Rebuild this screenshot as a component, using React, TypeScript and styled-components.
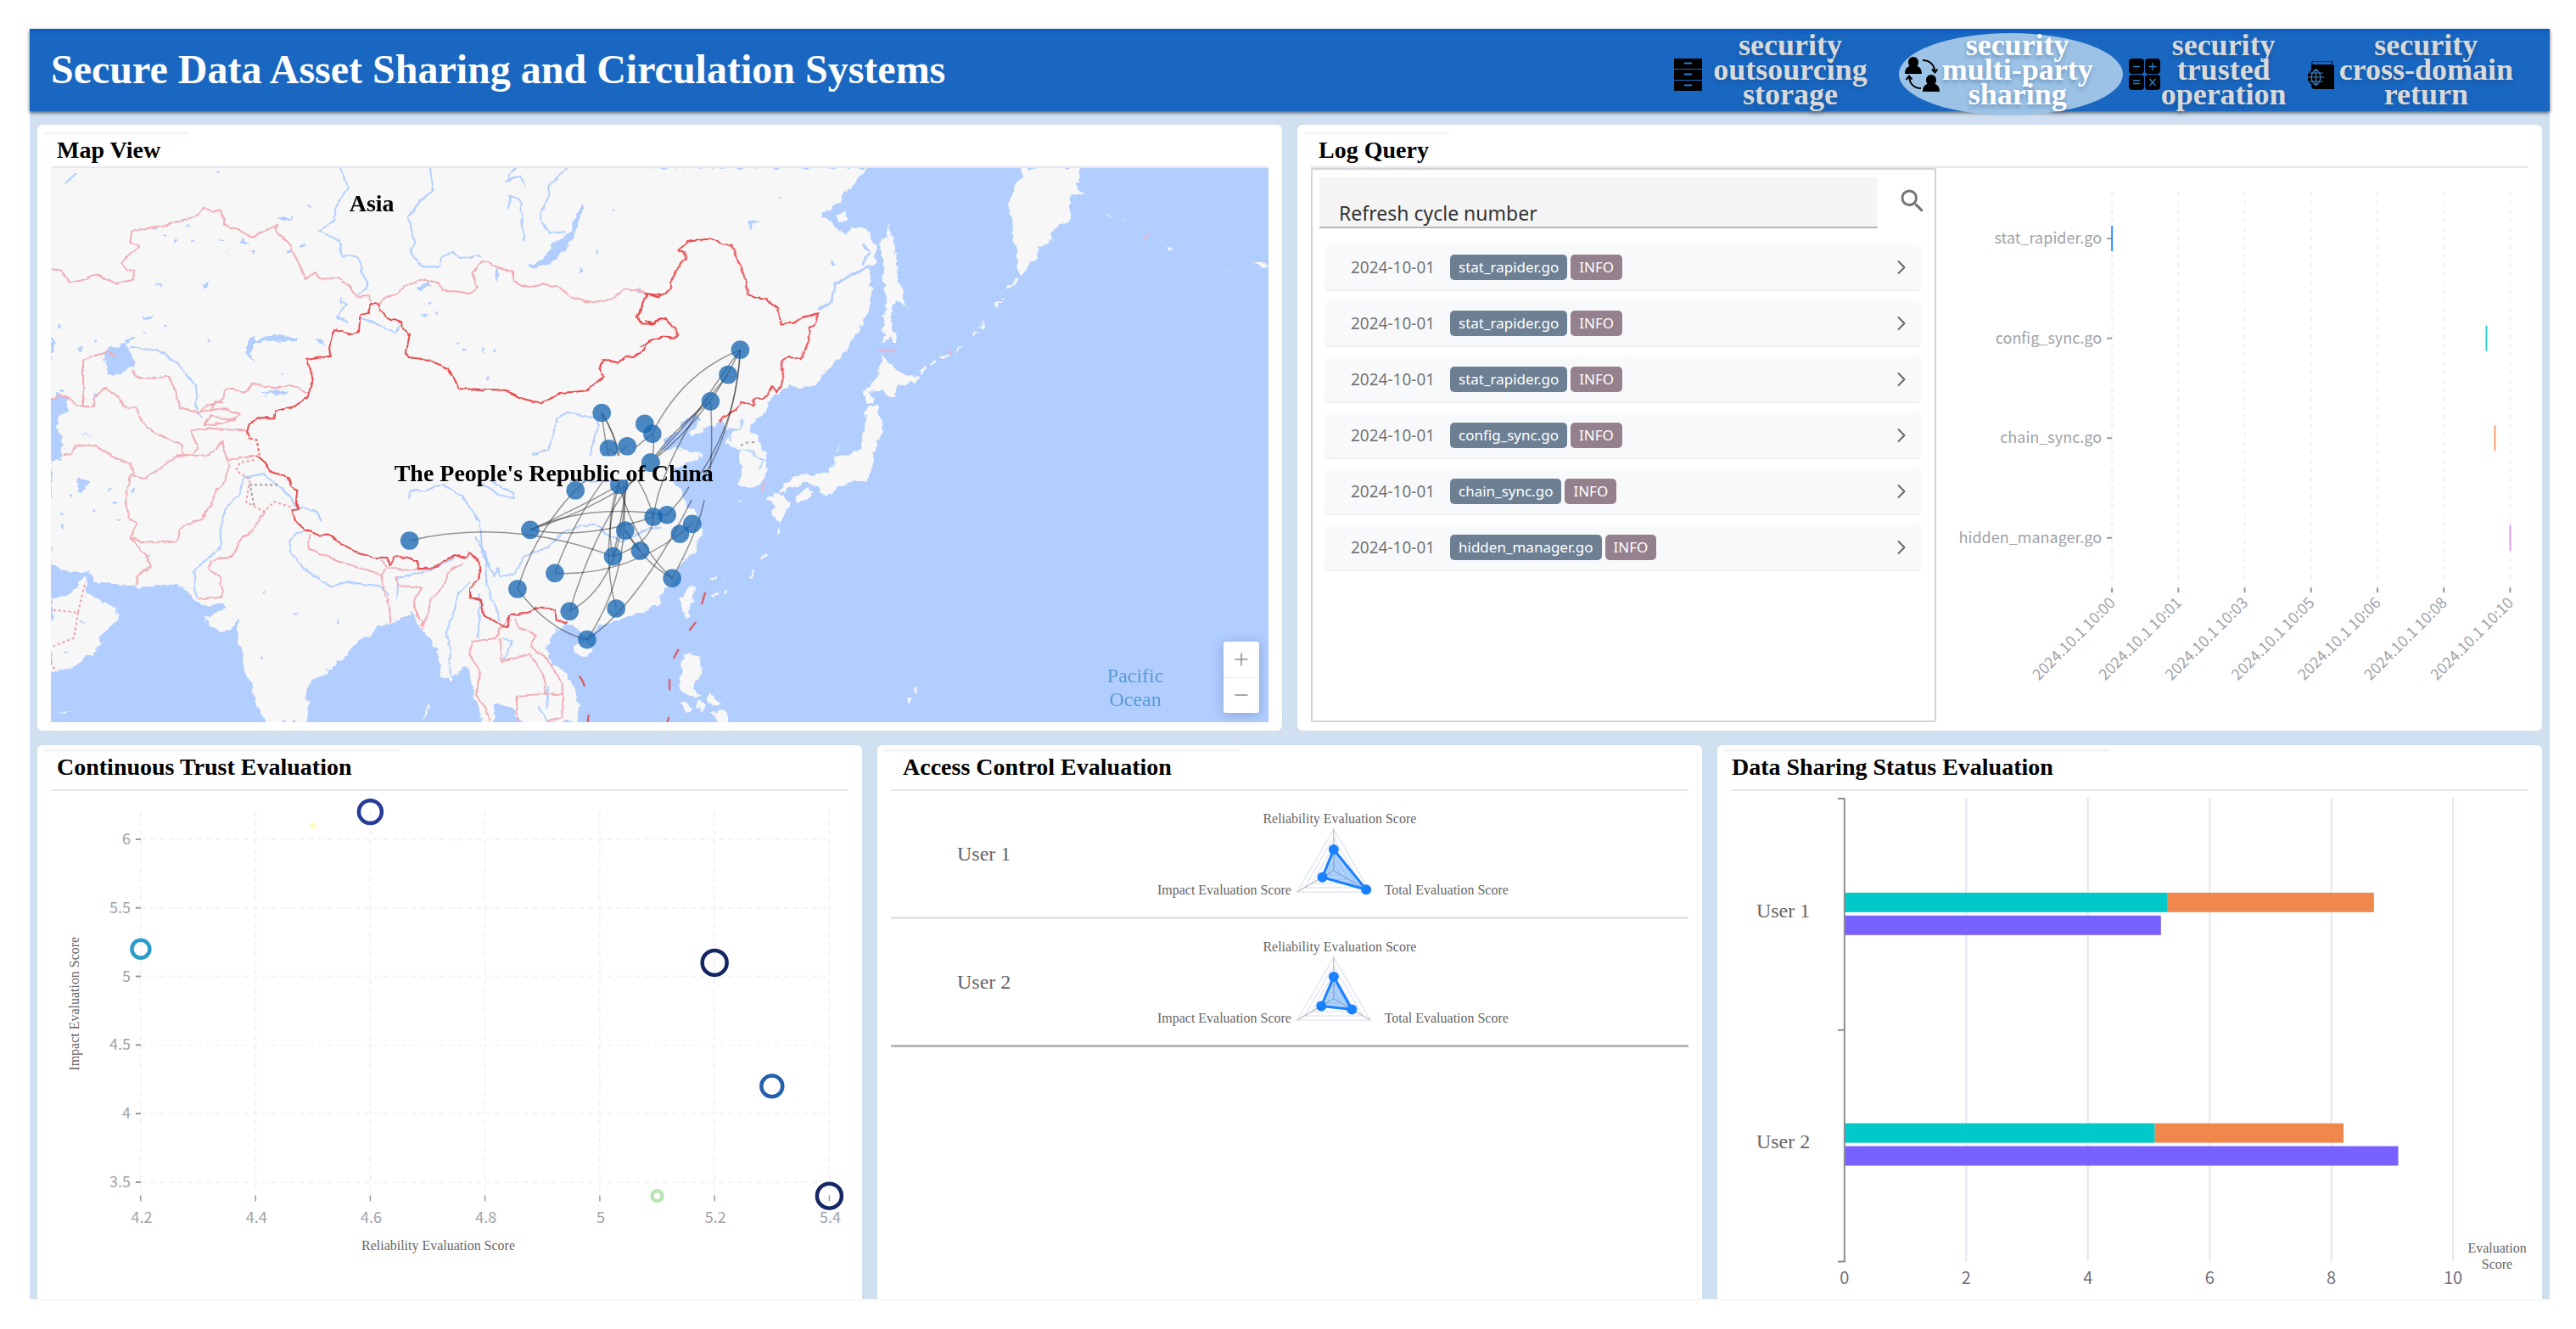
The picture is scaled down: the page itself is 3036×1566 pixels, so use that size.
import React, { useId } from "react";
import styled, { createGlobalStyle } from "styled-components";
import { ChevronRight, Minus, Plus } from "lucide-react";
import { MdSearch } from "react-icons/md";

const serif = `"Liberation Serif", "Times New Roman", serif`;
const sans = `"Noto Sans", "Open Sans", sans-serif`;
const chartSans = `"Noto Sans CJK SC", "Noto Sans", sans-serif`;

const Global = createGlobalStyle`
  * { box-sizing: border-box; }
  body { margin: 0; background: #fff; font-family: ${serif}; }
`;

/* ---------- shell ---------- */

const Page = styled.div`
  padding: 34px 31px 35px 35px;
`;

const Frame = styled.div`
  background: #d1e0f0;
`;

const Header = styled.header`
  position: relative;
  display: flex;
  justify-content: space-between;
  align-items: flex-start;
  height: 97px;
  padding: 5px 7px 0 25px;
  background: #1967c1;
  box-shadow: inset 0 5px 3px -1px #0a5dbd, 0 2px 4px rgba(40, 50, 60, 0.75);
`;

const AppTitle = styled.h1`
  margin: 0;
  font-size: 48px;
  line-height: 86px;
  font-weight: bold;
  color: #fff;
`;

const Nav = styled.nav`
  display: flex;
`;

const NavItem = styled.button<{ $active?: boolean; $tail: number }>`
  display: flex;
  align-items: center;
  height: 97px;
  padding: 0 ${(p) => p.$tail}px 0 7px;
  border: 0;
  border-radius: 50%;
  background: ${(p) => (p.$active ? "#9cc2e6" : "transparent")};
  color: ${(p) => (p.$active ? "#fff" : "#d9d9d9")};
  font: bold 36px/29px ${serif};
  text-shadow: 0 3px 5px rgba(20, 60, 110, 0.35);
  cursor: pointer;
`;

const NavIcon = styled.span<{ $box: number }>`
  display: flex;
  width: ${(p) => p.$box}px;
`;

const NavLabel = styled.span`
  align-self: flex-start;
  display: flex;
  flex-direction: column;
  align-items: center;
`;

const Body = styled.main`
  display: flex;
  flex-direction: column;
  gap: 17px;
  padding: 16px 9px 0;
`;

const Row = styled.div<{ $cols: number }>`
  display: grid;
  grid-template-columns: repeat(${(p) => p.$cols}, minmax(0, 1fr));
  gap: 18px;
`;

const Panel = styled.section<{ $flush?: boolean }>`
  display: flex;
  flex-direction: column;
  padding: 0 16px ${(p) => (p.$flush ? 0 : 10)}px;
  border-radius: ${(p) => (p.$flush ? "6px 6px 0 0" : "6px")};
  background: #fff;
  box-shadow: 0 0 2px #cfd4da;
`;

const PanelHead = styled.div<{ $tall?: boolean }>`
  height: ${(p) => (p.$tall ? 54 : 51)}px;
  padding-top: ${(p) => (p.$tall ? 4 : 8)}px;
  border-bottom: 2px solid #e4e7ed;
`;

const PanelTitle = styled.h2<{ $strip: number; $indent: number }>`
  width: ${(p) => p.$strip}px;
  margin: 0 0 0 -8px;
  padding-left: ${(p) => p.$indent + 8}px;
  border-top: 4px solid #f4f7f7;
  font-size: 28px;
  line-height: 36px;
  font-weight: bold;
  color: #000;
  white-space: nowrap;
`;

const Drawing = styled.svg`
  display: block;
  width: 100%;
  height: auto;
`;

/* ---------- navigation icons ---------- */

const CabinetIcon = () => (
  <svg width="33" height="38" viewBox="0 0 33 38" aria-hidden>
    {[0, 13, 26].map((y) => (
      <g key={y}>
        <rect x="0" y={y} width="33" height="12" fill="#000" />
        <rect x="12" y={y + 4.5} width="9" height="2" fill="#2f7fd0" />
      </g>
    ))}
  </svg>
);

const PeopleIcon = () => (
  <svg width="41" height="41" viewBox="0 0 41 41" aria-hidden>
    <path d="M10 0a6 6 0 0 1 6 6c0 2-.6 3.600-1.500 4.800C18 12.500 20 15 20 20H0c0-5 2-7.500 5.500-9.200C4.600 9.600 4 8 4 6a6 6 0 0 1 6-6Z" />
    <path d="M31 21a6 6 0 0 1 6 6c0 2-.6 3.600-1.500 4.800C39 33.500 41 36 41 41H21c0-5 2-7.500 5.500-9.200C25.600 30.600 25 29 25 27a6 6 0 0 1 6-6Z" />
    <path
      d="M21 4c8 0 14 5 14.500 14M32 14.500l3.500 4 3-4M19 37C11 37 5.500 32 5 23M1.500 27L5 22.500 8.500 26.500"
      fill="none"
      stroke="#000"
      strokeWidth="2"
    />
  </svg>
);

const CalculatorIcon = () => (
  <svg width="37" height="37" viewBox="0 0 37 37" aria-hidden>
    <rect width="18" height="18" rx="4" />
    <rect x="19" width="18" height="18" rx="4" />
    <rect y="19" width="18" height="18" rx="4" />
    <rect x="19" y="19" width="18" height="18" rx="4" />
    <path
      d="M5 9.500h8M23.500 9.500h9M28 5v9M5 26h8M5 29.500h8M24.500 24l7 8M31.500 24l-7 8"
      stroke="#2f7fd0"
      strokeWidth="1.300"
      fill="none"
    />
  </svg>
);

const GlobeBookIcon = () => (
  <svg width="31" height="34" viewBox="0 0 31 34" aria-hidden>
    <path d="M5 1h24v5h2v28H8c-3 0-4-2-4-5V5Z" />
    <path d="M6.500 1.500H28v3.500H6.500a1.800 1.800 0 0 1 0-3.500Z" fill="#1967c1" />
    <circle cx="9.500" cy="20" r="10" />
    <path
      d="M9.500 10.500v19M0 20h19.500M2 15h15.500M2 25h15.500M9.500 10.500c-7 5-7 14 0 19M9.500 10.500c7 5 7 14 0 19"
      stroke="#3d86d3"
      strokeWidth="1.200"
      fill="none"
    />
  </svg>
);

const navItems = [
  { lines: ["security", "outsourcing", "storage"], icon: <CabinetIcon />, box: 46, tail: 37 },
  { lines: ["security", "multi-party", "sharing"], icon: <PeopleIcon />, box: 44, tail: 35, active: true },
  { lines: ["security", "trusted", "operation"], icon: <CalculatorIcon />, box: 38, tail: 18 },
  { lines: ["security", "cross-domain", "return"], icon: <GlobeBookIcon />, box: 37, tail: 36 },
];

/* ---------- map ---------- */

const MapBox = styled.div`
  position: relative;
`;

const ZoomControl = styled.div`
  position: absolute;
  right: 11px;
  bottom: 11px;
  display: flex;
  flex-direction: column;
  width: 42px;
  border-radius: 3px;
  background: #fff;
  box-shadow: 0 2px 14px rgba(60, 80, 130, 0.35);
`;

const ZoomButton = styled.button`
  display: grid;
  place-items: center;
  height: 42px;
  padding: 0;
  border: 0;
  background: none;
  color: #8c8c8c;
  cursor: pointer;

  & + & {
    border-top: 1px solid #ececec;
  }
`;

const MapText = styled.text<{ $water?: boolean }>`
  font-family: ${serif};
  font-size: ${(p) => (p.$water ? 24 : 28)}px;
  font-weight: ${(p) => (p.$water ? "normal" : "bold")};
  fill: ${(p) => (p.$water ? "#5b9bd5" : "#000")};
  text-anchor: ${(p) => (p.$water ? "middle" : "start")};
`;

const WEST = "translate(40 180) scale(0.47194 0.44005)";
const EAST = "translate(760 180) scale(0.48469 0.44005)";
const CENTRE = "translate(460 380) scale(0.33333)";

const westLand = [
  "42,40 1568,40 1568,1205 1540,1225 1500,1238 1450,1255 1410,1275 1388,1290 1380,1300 1366,1284 1350,1266 1335,1262 1310,1275 1285,1300 1280,1330 1300,1375 1335,1405 1355,1440 1362,1480 1358,1526 1215,1526 1195,1490 1165,1475 1148,1478 1145,1526 1118,1526 1110,1480 1100,1440 1085,1390 1075,1375 1060,1395 1040,1412 1015,1405 1015,1370 1005,1330 975,1290 955,1250 945,1230 920,1250 890,1262 860,1268 845,1290 810,1310 780,1345 750,1375 720,1400 690,1415 683,1450 688,1490 680,1526 580,1526 560,1490 545,1430 525,1380 515,1320 508,1250 500,1270 470,1285 440,1265 425,1240 480,1225 470,1205 440,1215 415,1205 395,1195 385,1170 370,1158 340,1158 310,1162 250,1163 200,1155 150,1148 140,1115 115,1125 90,1122 60,1110 42,1100",
  "42,1195 80,1190 110,1165 130,1135 132,1170 150,1195 190,1215 210,1240 195,1270 165,1300 160,1330 130,1350 100,1375 42,1395",
  "1348,1318 1375,1308 1398,1318 1394,1335 1370,1350 1350,1340",
  "60,1495 88,1497 75,1502",
  "982,1470 985,1475 978,1522 974,1522",
];

const westWater = [
  "42,655 80,655 92,690 60,705 60,745 72,755 75,822 42,826",
  "42,490 50,500 50,530 42,542",
  "175,545 185,520 235,512 250,490 225,500 245,545 253,560 235,585 205,598 180,590 175,560",
  "518,485 530,515 545,497 600,493 660,496 655,506 600,503 560,505 545,520 540,540 550,560 535,545 532,520",
  "698,495 720,500 728,522 712,515",
  "1370,133 1375,140 1360,200 1335,250 1310,280 1285,300 1255,310 1235,303 1270,285 1300,245 1340,215 1350,180",
  "565,645 600,635 640,640 610,650 595,648",
  "965,355 985,352 990,362 970,368",
  "1153,312 1162,312 1158,348 1152,340",
  "418,350 440,345 432,360 420,362",
  "605,175 650,170 625,186",
  "105,745 150,765 125,752",
  "112,870 135,880 120,915 110,905",
  "270,438 300,436 288,446",
  "612,595 637,596 625,599",
  "478,275 495,250 488,262",
  "520,225 535,240 520,245",
];

const westRivers = [
  "M765,40L785,90L768,120L750,150L752,180L712,210L765,235L768,275L810,280L820,320L835,360L808,380",
  "M990,40L998,100L965,130L935,170L950,240L940,265L970,305L1015,305L1020,280L1045,265L1065,282L1115,275",
  "M1335,40L1285,90L1288,115L1270,150L1265,180L1290,215L1330,212",
  "M1205,40L1180,75L1215,60L1230,90M1185,150L1190,115L1215,125L1225,240M80,80L105,55",
  "M240,520L310,530L355,560L380,595L405,620L403,680L420,710",
  "M770,385L765,400L782,405L757,440L785,455M815,445L850,455L905,483L915,460",
  "M660,950L620,900L570,860L525,870L515,915L485,945L470,980L465,1060L400,1120L405,1195",
  "M665,950L710,960L715,990",
  "M675,1010L640,1035L640,1070L670,1110L740,1163L780,1150L860,1160L890,1185",
  "M1050,1085L990,1120L910,1138L908,1195",
  "M1090,1150L1060,1180L1050,1230L1030,1280L1040,1330L1040,1400",
  "M1115,1180L1110,1300",
  "M1103,1030L1130,1080L1130,1160L1150,1210L1165,1260",
  "M937,925L940,905L980,905L1020,888L1070,920L1115,990L1120,1070L1150,1135L1160,1115L1165,1135L1200,1130L1225,1080L1280,1060L1330,1010L1400,995L1430,1020L1470,1040L1530,1010L1568,1000",
  "M1245,810L1285,795L1310,710L1330,695L1400,710L1412,730L1395,780L1390,812",
  "M1110,880L1160,915L1200,928L1195,910L1140,880M1340,880L1450,878",
  "M1170,1300L1195,1310L1175,1360M1260,1485L1285,1525M1285,1430L1280,1490",
];

const chinaWest = [
  "M1568,493L1550,500L1528,512L1525,530L1500,545L1480,545L1460,563L1425,552L1412,575L1424,600L1400,620L1380,638L1320,643L1265,670L1225,660L1185,640L1160,635L1062,632L1050,605L1035,580L990,555L935,548L930,535L938,492L925,470L918,455L880,440L865,420L862,403L843,403L835,428L815,432L812,480L795,487L752,475L738,520L740,545L680,555L690,575L697,610L690,630L685,655L650,680L605,692L598,710L560,710L540,725L532,745L540,765",
  "M555,810L580,830L590,855L635,868L643,895L658,905L655,930L663,955L645,958L655,990L680,1010L710,1025L735,1022L775,1050L800,1070L850,1085L885,1085L890,1105L905,1080L955,1092L963,1115L1000,1112L1050,1078L1080,1085L1090,1070L1112,1095L1115,1135L1090,1170L1090,1195L1117,1198L1125,1240L1160,1262L1185,1270L1187,1240L1225,1235L1250,1225L1268,1215L1303,1228L1305,1250L1332,1262",
  "M1568,382L1533,378L1508,440L1518,458L1550,458L1568,445",
];

const chinaEast = [
  "M0,378L8,378L32,388L65,365L65,345L85,300L100,285L98,268L83,262L105,238L160,230L190,243L212,248L228,290L240,320L252,380L295,392L325,415L332,458L365,456L380,442L423,430L413,465L403,470L400,500L380,553L350,545L332,560L338,600L332,630L322,640L310,625L300,645L285,658L265,658L268,678L235,668L220,690L195,705L182,722",
  "M0,450L22,458L35,445L52,448L75,470L82,492L70,498L45,492L20,502L5,510L-10,520",
];

const neighbours = [
  "M42,312L65,314L90,348L130,338L150,325L175,335L205,350L250,340L252,318L232,312L217,297L240,270L265,250L240,240L245,210L320,195L400,172L425,150L470,158L475,195L520,208L540,228L607,193L600,205L635,240L680,338L700,320L715,338L765,335L785,355L805,385L835,385L845,403",
  "M865,403L880,385L905,380L930,355L975,340L1010,348L1020,370L1060,372L1090,378L1105,360L1097,325L1120,288L1165,310L1195,318L1200,345L1235,362L1275,352L1315,362L1335,382L1390,402L1440,392L1480,362L1530,375",
  "M685,645L650,625L600,630L570,625L545,618L530,640L480,632L470,660L430,680L415,695L365,683L355,640L338,600L265,606L245,582",
  "M205,548L185,533L123,553L123,680M42,662L65,648L85,655L110,680L148,680L150,655L180,632L215,655L222,680L255,685L270,722L300,750L370,785L372,808L395,812L410,790L390,745L430,738L530,745",
  "M415,695L440,690L470,685L515,700L490,715L440,705L425,730L470,725L505,712M440,690L455,665L475,670",
  "M75,808L95,808L105,785L150,783L215,825L243,832L248,865L280,872L320,840L358,810L400,812L440,810L470,775L485,825L560,810",
  "M243,860L230,910L235,980L257,995L240,1032L280,1045L360,1040L365,1005L420,980L445,935L455,905L480,880L487,830M240,1032L282,1080L290,1110L258,1135L255,1160",
  "M575,960L550,1010L520,1030L495,1080L440,1095L437,1115L465,1140L472,1188L410,1195",
  "M690,1025L685,1060L760,1095L870,1130L880,1110L870,1090M870,1130L875,1180L885,1200L892,1258M885,1110L920,1118L995,1115",
  "M905,1135L910,1160L970,1165L950,1200L955,1240L975,1260L968,1280M1075,1100L1040,1120L1020,1165L990,1200L985,1240L965,1270",
  "M1190,1245L1165,1275L1155,1300L1095,1310L1088,1345L1115,1390L1105,1450L1130,1490L1138,1525",
  "M1165,1300L1170,1365L1210,1350L1240,1345L1275,1400L1280,1450L1205,1455L1210,1525M1200,1250L1215,1275L1255,1290L1240,1320L1280,1355L1320,1420L1322,1510L1285,1525M1280,1450L1320,1450",
];

const eastLand = [
  "-10,40 543,40 520,70 495,100 480,125 455,150 430,165 430,178 460,182 470,212 490,220 505,200 530,205 550,225 565,245 560,270 565,295 550,310 548,420 530,450 510,500 480,550 430,600 410,625 385,633 350,620 330,645 305,660 300,695 270,715 255,740 275,765 290,800 298,850 285,885 230,900 225,890 235,855 228,820 240,795 195,780 210,740 185,722 150,740 115,760 110,750 135,720 125,698 100,712 75,750 50,770 40,790 60,795 95,795 140,805 138,822 100,830 75,845 60,850 70,880 95,910 105,950 130,970 135,1020 125,1060 85,1110 70,1150 40,1185 0,1225 -10,1230",
  "920,40 1062,40 1052,70 1065,110 1035,115 1028,145 1035,178 1015,188 990,210 988,242 960,250 950,290 917,330 910,320 908,285 895,220 888,150 895,90 915,70",
  "595,195 605,215 608,260 620,330 632,400 643,420 615,400 600,405 595,440 600,470 612,490 615,512 595,490 583,518 580,500 588,410 582,330 575,265 580,235 592,230",
  "577,540 600,572 630,590 655,598 655,615 620,625 610,657 580,640 555,635 548,645 560,665 540,672 535,640 560,615 572,580",
  "548,680 565,675 568,695 580,735 575,760 560,790 555,820 550,860 540,885 510,880 480,890 460,900 445,922 430,915 425,890 400,885 360,895 330,910 335,890 375,865 420,862 445,860 465,820 500,810 525,790 535,745 540,690",
  "368,918 395,902 414,905 410,920 385,932 370,942",
  "300,932 330,910 352,935 345,970 325,995 315,970 312,945",
  "125,1162 122,1190 112,1220 100,1250 85,1220 90,1190 110,1165",
  "97,1342 133,1345 135,1400 115,1440 140,1455 120,1460 95,1445 80,1420 92,1395",
  "160,1450 180,1470 170,1485 155,1460",
  "130,1465 150,1480 140,1500 125,1485",
  "185,1490 205,1500 206,1526 185,1526 165,1505",
  "92,1475 115,1485 108,1500 95,1495",
  "465,165 490,158 490,178 475,185",
  "882,360 900,338 908,342 890,365",
  "1120,152 1138,178 1130,172",
  "1272,252 1290,256 1280,260",
  "1155,175 1172,188 1164,184",
  "1380,298 1388,288 1384,294",
  "1480,296 1520,294 1520,304 1495,303",
  "1408,306 1430,316 1424,315",
  "752,530 772,512 770,518 756,534",
  "225,928 240,926 235,933",
  "466,805 475,782 474,795",
];

const kurils = [
  "M655,610L680,580L735,540",
  "M800,495L830,445",
  "M855,415L872,385",
  "M258,1138L268,1118M285,1085L300,1073M320,1018L325,1005M640,1478L668,1428M160,1145L190,1142M165,1186L205,1175",
];

const seaMarks = [
  "M148,1178L139,1210",
  "M125,1258L109,1280",
  "M83,1330L71,1355",
  "M61,1410V1440",
  "M60,1512L55,1526",
];

const nodes: [number, number][] = [
  [1239, 97], [1196, 185], [1134, 279], [749, 320], [901, 359], [928, 394], [774, 447],
  [839, 438], [922, 496], [656, 594], [811, 575], [496, 734], [69, 772], [932, 688],
  [980, 681], [1069, 713], [1026, 748], [832, 736], [789, 828], [885, 808], [583, 887],
  [451, 943], [998, 905], [635, 1022], [800, 1012], [697, 1122],
];

const links = [
  "M69,772Q420,690 789,828", "M496,734Q690,770 932,688", "M496,734Q690,640 980,681",
  "M496,734Q700,640 811,575", "M496,734Q700,670 870,556", "M451,943Q520,720 690,560",
  "M451,943Q560,1090 697,1122", "M583,887Q650,700 755,560", "M583,887Q820,900 1026,748",
  "M635,1022Q720,740 860,556", "M635,1022Q830,920 834,556", "M697,1122Q880,1000 1067,628",
  "M697,1122Q860,880 822,556", "M998,905Q1090,740 1112,628", "M998,905Q870,790 811,575",
  "M998,905Q900,850 832,736", "M800,1012Q740,800 815,560", "M789,828Q760,700 811,560",
  "M789,828Q820,700 838,556", "M789,828Q930,780 932,688", "M932,688Q910,610 875,556",
  "M932,688Q960,470 1239,97", "M980,681Q1030,630 1058,582", "M1134,279Q1142,430 1133,520",
  "M1134,279Q1000,380 922,496", "M1196,185Q1060,350 922,496", "M1239,97Q1130,330 922,496",
  "M1239,97Q1030,180 928,394", "M1239,97Q1230,350 1085,555", "M1239,97Q1220,370 1105,555",
  "M749,320Q760,420 774,472", "M749,320Q800,400 811,474", "M749,320Q796,396 807,474",
  "M839,438L812,460", "M928,394L865,445", "M928,394Q940,440 922,496", "M774,447L800,465",
  "M1026,748L1069,713", "M832,736L885,808",
];

const specks: [number, number][] = [
  [300, 200], [330, 225], [395, 240], [385, 195], [350, 230], [670, 250], [688, 145], [460, 52],
  [470, 235], [545, 270], [640, 262], [313, 355], [330, 460], [275, 480], [440, 505], [115, 525],
  [155, 505], [990, 402], [975, 440], [1060, 510], [1075, 528], [1125, 530], [1150, 528], [1133, 603],
  [60, 470], [60, 650], [70, 640], [65, 970], [70, 1000], [150, 960], [200, 940], [210, 985],
  [285, 1078], [575, 1178], [570, 1350], [760, 1258], [655, 1235], [250, 905], [90, 925], [155, 650],
  [1412, 267], [1450, 158], [1365, 318], [1510, 368], [120, 1255], [80, 1340], [185, 900], [1005, 430],
];

const lines = (paths: string[]) =>
  paths.map((d) => <path key={d} d={d} vectorEffect="non-scaling-stroke" />);
const shapes = (points: string[]) => points.map((p) => <polygon key={p} points={p} />);

const MapView = () => {
  const rough = useId();
  const fine = useId();
  return (
    <MapBox>
      <Drawing viewBox="60 198 1436 653" role="img" aria-label="Map of Asia with linked nodes">
        <defs>
          <filter id={rough} x="0" y="0" width="100%" height="100%">
            <feTurbulence type="fractalNoise" baseFrequency="0.09" numOctaves="3" seed="4" />
            <feDisplacementMap in="SourceGraphic" scale="11" xChannelSelector="R" yChannelSelector="G" />
          </filter>
          <filter id={fine} x="0" y="0" width="100%" height="100%">
            <feTurbulence type="fractalNoise" baseFrequency="0.11" numOctaves="2" seed="9" />
            <feDisplacementMap in="SourceGraphic" scale="5" xChannelSelector="R" yChannelSelector="G" />
          </filter>
        </defs>
        <rect x="60" y="198" width="1436" height="653" fill="#b1ceff" />
        <g filter={`url(#${rough})`}>
          <rect x="40" y="178" width="1476" height="693" fill="#b1ceff" />
          <rect x="40" y="178" width="720" height="240" fill="#f7f7f7" />
          <g fill="#f7f7f7">
            <g transform={WEST}>{shapes(westLand)}</g>
            <g transform={EAST}>{shapes(eastLand)}</g>
          </g>
          <g fill="#b1ceff" transform={WEST}>
            {shapes(westWater)}
            {specks.map(([x, y]) => (
              <ellipse key={`${x}-${y}`} cx={x} cy={y} rx="5" ry="4" />
            ))}
          </g>
          <g transform={EAST} fill="none" stroke="#f7f7f7" strokeWidth="3" strokeDasharray="9 5">
            {lines(kurils)}
          </g>
          <g transform={EAST} fill="#b1ceff">
            <polygon points="250,188 285,180 262,195 255,205" />
            <ellipse cx="458" cy="295" rx="4" ry="8" />
            <ellipse cx="330" cy="118" rx="3" ry="3" />
          </g>
        </g>
        <g filter={`url(#${fine})`} fill="none" strokeLinejoin="round">
          <g transform={WEST} stroke="#b1ceff" strokeWidth="2">{lines(westRivers)}</g>
          <g transform={EAST} stroke="#b1ceff" strokeWidth="3">
            {lines(["M548,305L500,330L465,350L455,400L423,420", "M530,245L550,265L530,300"])}
          </g>
          <g transform={EAST} stroke="#b1ceff" strokeWidth="2">
            {lines(["M240,715L230,740L210,745L208,775", "M240,797L265,800L270,815L290,820L280,850"])}
          </g>
          <g transform={WEST} stroke="#f0adb5" strokeWidth="2">{lines(neighbours)}</g>
          <g stroke="#e5474b" strokeWidth="2">
            <g transform={WEST}>{lines(chinaWest)}</g>
            <g transform={EAST}>{lines(chinaEast)}</g>
          </g>
        </g>
        <g transform={WEST} fill="none" stroke="#ee9aa3" strokeWidth="2" strokeDasharray="3 3">
          {lines(["M505,850L515,830L555,822M510,855L540,875L530,935L575,962L600,935L645,950", "M48,1225L110,1232L128,1150M110,1232L100,1300L48,1322M42,1365L52,1385"])}
        </g>
        <g transform={WEST} fill="none" stroke="#e5474b" strokeWidth="2" strokeDasharray="3 3">
          {lines(["M540,765L557,770L563,810"])}
        </g>
        <g transform={WEST} fill="none" stroke="#9a9a9a" strokeWidth="2" strokeDasharray="3 3">
          {lines(["M550,945L540,890L575,890L612,890"])}
        </g>
        <g fill="none" stroke="#e5474b" strokeWidth="2">
          <g transform={EAST}>{lines(seaMarks)}</g>
          <g transform={WEST}>{lines(["M1362,1402Q1373,1415 1376,1430M1386,1506L1384,1526"])}</g>
        </g>
        <g transform={EAST} fill="none" stroke="#ecb2c4" strokeWidth="2">
          {lines(["M567,531H613", "M741,528L748,543", "M1214,235L1227,216", "M292,880L285,907"])}
        </g>
        <g transform={EAST} fill="none" stroke="#9a9a9a" strokeWidth="2" strokeDasharray="3 4">
          {lines(["M235,785L243,777L270,775"])}
        </g>
        <g transform={CENTRE}>
          <g fill="none" stroke="#000" strokeOpacity="0.4" strokeWidth="4.500">
            {links.map((d) => (
              <path key={d} d={d} />
            ))}
          </g>
          <g fill="#1565b0" fillOpacity="0.76">
            {nodes.map(([x, y]) => (
              <circle key={`${x}-${y}`} cx={x} cy={y} r="32.500" />
            ))}
          </g>
          <rect x="380" y="473" width="496" height="83" fill="#f7f7f7" />
          <circle cx="922" cy="496" r="32.500" fill="#4a89c0" />
        </g>
        <MapText x="412" y="249">Asia</MapText>
        <MapText x="465" y="567">The People's Republic of China</MapText>
        <MapText $water x="1339" y="804">Pacific</MapText>
        <MapText $water x="1339" y="832">Ocean</MapText>
      </Drawing>
      <ZoomControl>
        <ZoomButton aria-label="Zoom in"><Plus size={24} strokeWidth={1.5} /></ZoomButton>
        <ZoomButton aria-label="Zoom out"><Minus size={24} strokeWidth={1.5} /></ZoomButton>
      </ZoomControl>
    </MapBox>
  );
};

/* ---------- log query ---------- */

const LogLayout = styled.div`
  flex: 1;
  display: grid;
  grid-template-columns: 736fr 698fr;
`;

const LogBox = styled.div`
  padding: 9px 8px;
  border: 2px solid #d3d3d7;
  border-radius: 2px;
`;

const SearchBar = styled.form`
  display: flex;
  align-items: center;
  justify-content: space-between;
`;

const SearchInput = styled.input`
  width: 658px;
  height: 60px;
  padding: 26px 24px 0 23px;
  border: 0;
  border-bottom: 2px solid #b4b4b4;
  border-radius: 4px 4px 0 0;
  background: #f5f5f5;
  color: #333;
  font: 23px/32px ${sans};
`;

const SearchButton = styled.button`
  display: flex;
  padding: 0 0 4px;
  border: 0;
  background: none;
  color: #757575;
  cursor: pointer;
`;

const LogList = styled.ul`
  display: flex;
  flex-direction: column;
  gap: 13px;
  margin: 19px 7px 0;
  padding: 0;
  list-style: none;
`;

const LogEntry = styled.button`
  display: flex;
  align-items: center;
  gap: 4px;
  width: 100%;
  height: 53px;
  padding: 0 10px 0 30px;
  border: 0;
  border-radius: 6px;
  background: #f8f9fb;
  box-shadow: 0 2px 2px #eceef4;
  color: #666;
  font: 19px/30px ${sans};
  cursor: pointer;

  svg { margin-left: auto; }
`;

const LogDate = styled.time`
  width: 113px;
  color: #757575;
  text-align: left;
`;

const Tag = styled.span<{ $level?: boolean }>`
  height: 30px;
  padding: 0 10px;
  border-radius: 5px;
  background: ${(p) => (p.$level ? "#95818d" : "#6c7f93")};
  color: #fff;
  font-size: 17px;
  line-height: 29px;
`;

const logFiles = ["stat_rapider.go", "stat_rapider.go", "stat_rapider.go", "config_sync.go", "chain_sync.go", "hidden_manager.go"];

const AxisText = styled.text<{ $end?: boolean; $dark?: boolean; $small?: boolean }>`
  font-family: ${chartSans};
  font-size: ${(p) => (p.$small ? 18 : 20)}px;
  fill: ${(p) => (p.$dark ? "#6e7079" : "#a0a3a8")};
  text-anchor: ${(p) => (p.$end ? "end" : "middle")};
`;

const AxisName = styled.text<{ $start?: boolean; $large?: boolean }>`
  font-family: ${serif};
  font-size: ${(p) => (p.$large ? 24 : 16)}px;
  fill: #666;
  text-anchor: ${(p) => (p.$start ? "start" : "middle")};
`;

const timeline = [
  { name: "stat_rapider.go", x: 2489, color: "#2f8cff" },
  { name: "config_sync.go", x: 2930, color: "#2fd0cc" },
  { name: "chain_sync.go", x: 2940, color: "#f5a06c" },
  { name: "hidden_manager.go", x: 2958, color: "#d79bff" },
];
const times = ["10:00", "10:01", "10:03", "10:05", "10:06", "10:08", "10:10"];

const Timeline = () => (
  <Drawing viewBox="2282 198 698 653" role="img" aria-label="Log timeline">
    {times.map((t, i) => {
      const x = 2489 + i * 78.15;
      return (
        <g key={t}>
          <path d={`M${x},226V690`} stroke="#ececec" strokeWidth="1.500" strokeDasharray="5 5.500" />
          <path d={`M${x},692v6`} stroke="#999" strokeWidth="2" />
          <AxisText $end $small transform={`translate(${x + 5} 711) rotate(-45)`}>{`2024.10.1 ${t}`}</AxisText>
        </g>
      );
    })}
    {timeline.map((row, i) => {
      const y = 281 + i * 117.5;
      return (
        <g key={row.name}>
          <path d={`M2483,${y}h6`} stroke="#999" strokeWidth="2" />
          <path d={`M${row.x},${y - 15}v30`} stroke={row.color} strokeWidth="2" />
          <AxisText $end $small x="2477" y={y + 6}>{row.name}</AxisText>
        </g>
      );
    })}
  </Drawing>
);

/* ---------- scatter ---------- */

const points = [
  { x: 4.6, y: 6.2, r: 13.5, color: "#253d99" },
  { x: 4.2, y: 5.2, r: 10.5, color: "#2b9bc8" },
  { x: 5.2, y: 5.1, r: 14.5, color: "#142663" },
  { x: 5.3, y: 4.2, r: 12.5, color: "#2560ad" },
  { x: 5.4, y: 3.4, r: 14.5, color: "#142663" },
  { x: 5.1, y: 3.4, r: 6, color: "#b9e5b4" },
  { x: 4.5, y: 6.1, r: 1.5, color: "#fffdc4" },
];
const sx = (v: number) => 166 + (v - 4.2) * 677;
const sy = (v: number) => 988 + (6 - v) * 161.8;

const Scatter = () => (
  <Drawing viewBox="60 931 941 599" role="img" aria-label="Continuous trust scatter chart">
    {[4.2, 4.4, 4.6, 4.8, 5, 5.2, 5.4].map((v) => (
      <g key={v}>
        <path d={`M${sx(v)},955V1406`} stroke="#efefef" strokeWidth="1.500" strokeDasharray="6 5" />
        <path d={`M${sx(v)},1408v7`} stroke="#999" strokeWidth="1.500" />
        <AxisText $small x={sx(v) + 1} y="1441">{v}</AxisText>
      </g>
    ))}
    {[6, 5.5, 5, 4.5, 4, 3.5].map((v) => (
      <g key={v}>
        <path d={`M166,${sy(v)}H978`} stroke="#f1f1f1" strokeWidth="1.500" strokeDasharray="6 5" />
        <path d={`M160,${sy(v)}h6`} stroke="#999" strokeWidth="2" />
        <AxisText $end $small x="154" y={sy(v) + 6}>{v}</AxisText>
      </g>
    ))}
    {points.map((p) => (
      <circle key={`${p.x}-${p.y}`} cx={sx(p.x)} cy={sy(p.y)} r={p.r} fill="none" stroke={p.color} strokeWidth="4.500" />
    ))}
    <AxisName x="517" y="1473">Reliability Evaluation Score</AxisName>
    <AxisName transform="translate(93 1182) rotate(-90)">Impact Evaluation Score</AxisName>
  </Drawing>
);

/* ---------- radar ---------- */

const UserRow = styled.div<{ $last?: boolean }>`
  display: grid;
  grid-template-columns: 287fr 655fr;
  align-items: center;
  height: 151px;
  border-bottom: 3px solid ${(p) => (p.$last ? "#b8b8b8" : "#e6e6e6")};
`;

const UserName = styled.span`
  padding-left: 78px;
  font-size: 24px;
  line-height: 32px;
  color: #666;
`;

const users = [
  { name: "User 1", values: [0.51, 0.89, 0.31] },
  { name: "User 2", values: [0.53, 0.5, 0.34] },
];
const axes = [[0, -49], [43, 25], [-43, 25]];
const ring = (values: number[]) => axes.map(([x, y], i) => `${x * values[i]},${y * values[i]}`).join(" ");

const Radar = ({ values, name }: { values: number[]; name: string }) => (
  <Drawing viewBox="-236 -93 654 148" role="img" aria-label={`${name} scores`}>
    {[1, 0.8, 0.6, 0.4, 0.2].map((s) => (
      <polygon key={s} points={ring([s, s, s])} fill="none" stroke="#e3e8f2" strokeWidth="1.500" />
    ))}
    {axes.map(([x, y]) => (
      <path key={`${x}${y}`} d={`M0,0L${x},${y}`} stroke="#c4c4c4" strokeWidth="1.500" />
    ))}
    <polygon points={ring(values)} fill="#1a80ff" fillOpacity="0.35" stroke="#1a80ff" strokeWidth="3" />
    {axes.map(([x, y], i) => (
      <circle key={i} cx={x * values[i]} cy={y * values[i]} r="6" fill="#1a80ff" />
    ))}
    <AxisName x="7" y="-56">Reliability Evaluation Score</AxisName>
    <AxisName x="-129" y="28">Impact Evaluation Score</AxisName>
    <AxisName x="133" y="28">Total Evaluation Score</AxisName>
  </Drawing>
);

/* ---------- bars ---------- */

const bars = [
  { name: "User 1", y: 1051, a: 5.3, b: 3.4, c: 5.2 },
  { name: "User 2", y: 1323, a: 5.1, b: 3.1, c: 9.1 },
];
const UNIT = 71.8;

const Bars = () => (
  <Drawing viewBox="2040 931 941 599" role="img" aria-label="Data sharing bar chart">
    {[0, 2, 4, 6, 8, 10].map((v) => (
      <g key={v}>
        {v > 0 && <path d={`M${2174 + v * UNIT},939V1486`} stroke="#e2e6f0" strokeWidth="2" />}
        <AxisText $dark x={2174 + v * UNIT} y="1513">{v}</AxisText>
      </g>
    ))}
    {bars.map((b) => (
      <g key={b.name}>
        <rect x="2174" y={b.y} width={b.a * UNIT} height="23" fill="#00c9c9" />
        <rect x={2174 + b.a * UNIT} y={b.y} width={b.b * UNIT} height="23" fill="#f0884d" />
        <rect x="2174" y={b.y + 27} width={b.c * UNIT} height="23" fill="#7862ff" />
        <AxisName $large $start x="2070" y={b.y + 29}>{b.name}</AxisName>
      </g>
    ))}
    <path d="M2166,940h8V1486h-8M2166,1213h8" fill="none" stroke="#8a8d94" strokeWidth="2" />
    <AxisName x="2944" y="1476">Evaluation</AxisName>
    <AxisName x="2944" y="1495">Score</AxisName>
  </Drawing>
);

/* ---------- page ---------- */

export default function App() {
  return (
    <Page>
      <Global />
      <Frame>
        <Header>
          <AppTitle>Secure Data Asset Sharing and Circulation Systems</AppTitle>
          <Nav>
            {navItems.map((item) => (
              <NavItem key={item.lines[1]} $active={item.active} $tail={item.tail}>
                <NavIcon $box={item.box}>{item.icon}</NavIcon>
                <NavLabel>
                  {item.lines.map((line) => (
                    <span key={line}>{line}</span>
                  ))}
                </NavLabel>
              </NavItem>
            ))}
          </Nav>
        </Header>
        <Body>
          <Row $cols={2}>
            <Panel>
              <PanelHead><PanelTitle $strip={170} $indent={7}>Map View</PanelTitle></PanelHead>
              <MapView />
            </Panel>
            <Panel>
              <PanelHead><PanelTitle $strip={170} $indent={9}>Log Query</PanelTitle></PanelHead>
              <LogLayout>
                <LogBox>
                  <SearchBar onSubmit={(e) => e.preventDefault()}>
                    <SearchInput aria-label="Refresh cycle number" defaultValue="Refresh cycle number" />
                    <SearchButton type="submit" aria-label="Search"><MdSearch size={36} /></SearchButton>
                  </SearchBar>
                  <LogList>
                    {logFiles.map((file, i) => (
                      <li key={i}>
                        <LogEntry>
                          <LogDate>2024-10-01</LogDate>
                          <Tag>{file}</Tag>
                          <Tag $level>INFO</Tag>
                          <ChevronRight size={28} strokeWidth={1.7} />
                        </LogEntry>
                      </li>
                    ))}
                  </LogList>
                </LogBox>
                <Timeline />
              </LogLayout>
            </Panel>
          </Row>
          <Row $cols={3}>
            <Panel $flush>
              <PanelHead $tall><PanelTitle $strip={420} $indent={7}>Continuous Trust Evaluation</PanelTitle></PanelHead>
              <Scatter />
            </Panel>
            <Panel $flush>
              <PanelHead $tall><PanelTitle $strip={420} $indent={14}>Access Control Evaluation</PanelTitle></PanelHead>
              {users.map((u, i) => (
                <UserRow key={u.name} $last={i === users.length - 1}>
                  <UserName>{u.name}</UserName>
                  <Radar values={u.values} name={u.name} />
                </UserRow>
              ))}
            </Panel>
            <Panel $flush>
              <PanelHead $tall><PanelTitle $strip={454} $indent={1}>Data Sharing Status Evaluation</PanelTitle></PanelHead>
              <Bars />
            </Panel>
          </Row>
        </Body>
      </Frame>
    </Page>
  );
}
